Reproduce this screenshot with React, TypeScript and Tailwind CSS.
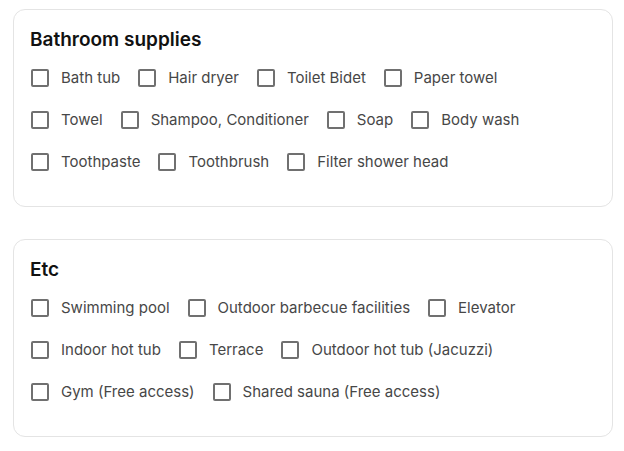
import React from "react";

const sections: { title: string; rows: string[][] }[] = [
  {
    title: "Bathroom supplies",
    rows: [
      ["Bath tub", "Hair dryer", "Toilet Bidet", "Paper towel"],
      ["Towel", "Shampoo, Conditioner", "Soap", "Body wash"],
      ["Toothpaste", "Toothbrush", "Filter shower head"],
    ],
  },
  {
    title: "Etc",
    rows: [
      ["Swimming pool", "Outdoor barbecue facilities", "Elevator"],
      ["Indoor hot tub", "Terrace", "Outdoor hot tub (Jacuzzi)"],
      ["Gym (Free access)", "Shared sauna (Free access)"],
    ],
  },
];

function Item({ label }: { label: string }) {
  return (
    <label className="flex items-center gap-3 h-6 cursor-pointer">
      <span className="w-[18px] h-[18px] rounded-[2px] border-2 border-[#707070] bg-white shrink-0" />
      <span className="text-[15px] leading-6 text-[#474747]">{label}</span>
    </label>
  );
}

export default function App() {
  return (
    <div
      className="bg-white min-h-screen px-[13px] pt-[9px] flex flex-col gap-[32px] w-[624px]"
      style={{ fontFamily: "Inter, 'Noto Sans', sans-serif" }}
    >
      {sections.map((s) => (
        <div
          key={s.title}
          className="border border-[#e4e4e4] rounded-xl pl-[17px] pr-4 pt-4 pb-[32px] w-[600px]"
        >
          <h2 className="text-[19px] leading-7 font-semibold text-[#111111] mb-[12px] -ml-px">
            {s.title}
          </h2>
          <div className="flex flex-col gap-[18px]">
            {s.rows.map((row, i) => (
              <div key={i} className="flex gap-x-[18px]">
                {row.map((it) => (
                  <Item key={it} label={it} />
                ))}
              </div>
            ))}
          </div>
        </div>
      ))}
    </div>
  );
}
